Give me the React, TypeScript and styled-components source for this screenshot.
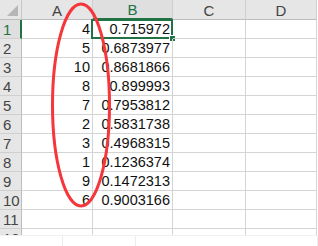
import React from "react";
import styled, { createGlobalStyle } from "styled-components";

const colA = [4, 5, 10, 8, 7, 2, 3, 1, 9, 6];
const colB = [
  "0.715972",
  "0.6873977",
  "0.8681866",
  "0.899993",
  "0.7953812",
  "0.5831738",
  "0.4968315",
  "0.1236374",
  "0.1472313",
  "0.9003166",
];

const App = () => {
  const rows = Array.from({ length: 12 }, (_, i) => i + 1);
  return (
    <Page>
      <GlobalStyle />
      <Sheet>
        <Grid>
          <Corner>
            <Triangle />
          </Corner>
          <ColHead>A</ColHead>
          <ColHead active>B</ColHead>
          <ColHead>C</ColHead>
          <ColHead>D</ColHead>
          {rows.map((r) => (
            <React.Fragment key={r}>
              <RowHead active={r === 1}>{r}</RowHead>
              <Cell>{colA[r - 1]}</Cell>
              <Cell>
                {colB[r - 1]}
                {r === 1 && (
                  <Selection>
                    <Handle />
                  </Selection>
                )}
              </Cell>
              <Cell />
              <Cell />
            </React.Fragment>
          ))}
        </Grid>
        <Marker width="70" height="214" viewBox="0 0 70 214">
          <ellipse
            cx="35"
            cy="105"
            rx="28.5"
            ry="101"
            fill="none"
            stroke="#f5363b"
            strokeWidth="3"
          />
        </Marker>
      </Sheet>
      <Footer>
        <FootCell w={63} />
        <FootCell w={72} />
        <FootCell w={183} />
      </Footer>
    </Page>
  );
};

export default App;

const GlobalStyle = createGlobalStyle`
  body {
    margin: 0;
    background: #ffffff;
  }
`;

const Page = styled.div`
  width: 318px;
  height: 246px;
  overflow: hidden;
  background: #ffffff;
  font-family: "Liberation Sans", Arial, sans-serif;
`;

const Sheet = styled.div`
  position: relative;
  height: 235px;
  overflow: hidden;
`;

const Grid = styled.div`
  display: grid;
  grid-template-columns: 22px 71px 80px 73px 71px;
  grid-template-rows: 20px repeat(12, 19px);
`;

const Corner = styled.div`
  position: relative;
  background: #e6e6e6;
  border-right: 1px solid #c6c6c6;
  border-bottom: 1px solid #bdbdbd;
`;

const Triangle = styled.div`
  position: absolute;
  right: 3px;
  bottom: 3px;
  width: 0;
  height: 0;
  border-left: 11px solid transparent;
  border-bottom: 11px solid #b6b6b6;
`;

const ColHead = styled.div<{ active?: boolean }>`
  background: ${(p) => (p.active ? "#dfdfdf" : "#e6e6e6")};
  border-right: 1px solid #cfcfcf;
  border-bottom: ${(p) => (p.active ? "2px solid #217346" : "1px solid #bdbdbd")};
  color: ${(p) => (p.active ? "#217346" : "#444444")};
  font-size: 15px;
  display: flex;
  align-items: center;
  justify-content: center;
  padding-top: 1px;
`;

const RowHead = styled.div<{ active?: boolean }>`
  background: ${(p) => (p.active ? "#dfdfdf" : "#e6e6e6")};
  border-right: ${(p) => (p.active ? "2px solid #217346" : "1px solid #bdbdbd")};
  border-bottom: 1px solid #cfcfcf;
  color: ${(p) => (p.active ? "#217346" : "#444444")};
  font-size: 15px;
  display: flex;
  align-items: center;
  padding-left: 3px;
`;

const Cell = styled.div`
  position: relative;
  border-right: 1px solid #d4d4d4;
  border-bottom: 1px solid #d4d4d4;
  color: #111111;
  font-size: 14.5px;
  display: flex;
  align-items: center;
  justify-content: flex-end;
  padding-right: 2px;
`;

const Selection = styled.div`
  position: absolute;
  left: -2px;
  top: -1px;
  right: -1px;
  bottom: -1px;
  border: 2px solid #217346;
  pointer-events: none;
`;

const Handle = styled.div`
  position: absolute;
  right: -5px;
  bottom: -5px;
  width: 5px;
  height: 5px;
  background: #217346;
  border: 1px solid #ffffff;
`;

const Marker = styled.svg`
  position: absolute;
  left: 46px;
  top: 0;
  pointer-events: none;
`;

const Footer = styled.div`
  display: flex;
  height: 11px;
  border-top: 1px solid #f0f0f0;
`;

const FootCell = styled.div<{ w: number }>`
  width: ${(p) => p.w}px;
  border-right: 1px solid #ededed;
`;
